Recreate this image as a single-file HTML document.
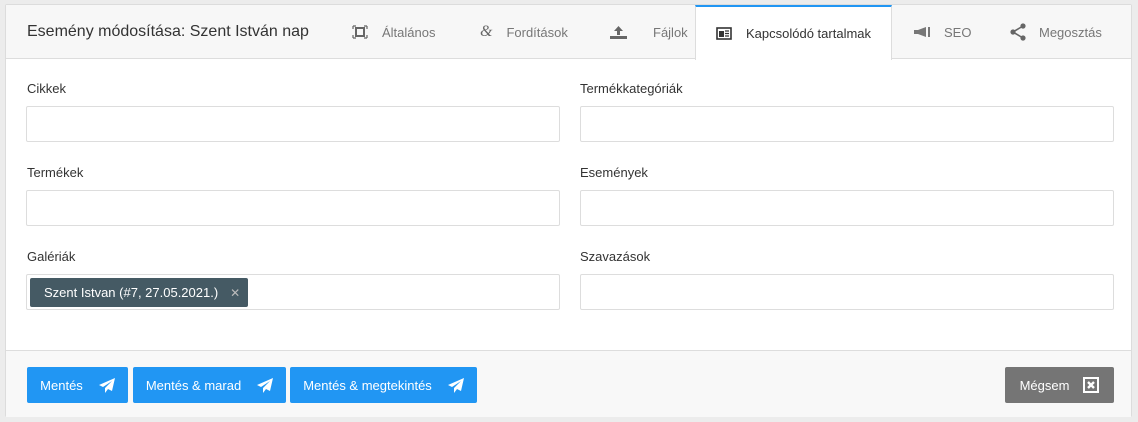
<!DOCTYPE html>
<html><head><meta charset="utf-8"><style>
*{box-sizing:border-box;margin:0;padding:0}
body{width:1138px;height:422px;background:#ececec;font-family:"Liberation Sans",Arial,sans-serif;position:relative;overflow:hidden}
.card{position:absolute;left:5px;top:4px;width:1127px;height:413px;background:#fff;border:1px solid #dcdcdc;border-radius:2px}
.hdr{position:absolute;left:0;top:0;width:100%;height:54px;background:#f7f7f7;border-bottom:1px solid #ddd}
.title{position:absolute;left:21px;top:18px;font-size:16px;color:#333}
.tab{position:absolute;top:0;height:54px;font-size:13px;color:#777;display:flex;align-items:center;gap:14px}
.tab.act{background:#fff;border-top:2px solid #2196f3;border-left:1px solid #ddd;border-right:1px solid #ddd;height:55px;color:#333;padding:0 20px}
.lbl{position:absolute;font-size:13px;color:#333}
.inp{position:absolute;width:534px;height:36px;border:1px solid #ddd;border-radius:2px;background:#fff}
.tag{position:absolute;left:3px;top:3px;height:29px;width:218px;background:#455a64;border-radius:2px;color:#fff;font-size:13px;padding:7px 0 0 14px}
.foot{position:absolute;left:0;top:345px;width:100%;height:67px;background:#f8f8f8;border-top:1px solid #ddd}
.btn{position:absolute;top:16px;height:36px;background:#2196f3;border-radius:2px;color:#fff;font-size:13px;display:flex;align-items:center;justify-content:center;gap:16px}
</style></head><body>
<div class="card">
<div class="hdr">
<div class="title">Esemény módosítása: Szent István nap</div>
<div class="tab" style="left:346px"><svg width="16" height="14" viewBox="0 0 16 14"><rect x="4" y="3" width="8" height="8" fill="none" stroke="#666" stroke-width="2"/><path d="M1 1h3M12 1h3M1 13h3M12 13h3M1 1v3M15 1v3M1 10v3M15 10v3" stroke="#666" stroke-width="1.2"/></svg>Általános</div>
<div class="tab" style="left:474px"><span style="font-style:italic;font-size:16px;color:#666;font-family:'Liberation Serif',serif">&amp;</span>Fordítások</div>
<div class="tab" style="left:604px;gap:26px"><svg width="17" height="14" viewBox="0 0 17 14"><path d="M8.5 1L4 6h3v4h3V6h3z M0 11h17v3H0z" fill="#666"/></svg>Fájlok</div>
<div class="tab act" style="left:689px"><svg width="16" height="13" viewBox="0 0 16 13"><rect x="1" y="1" width="14" height="11" fill="none" stroke="#333" stroke-width="1.6"/><rect x="3" y="4" width="5" height="6" fill="#333"/><path d="M9 4h4M9 6.5h4M9 9h4" stroke="#333" stroke-width="1.2"/></svg>Kapcsolódó tartalmak</div>
<div class="tab" style="left:908px;gap:12px"><svg width="18" height="12" viewBox="0 0 18 12"><path d="M0 4h4l8-3v10l-8-3H0z" fill="#777"/><rect x="14" y="1" width="2" height="10" fill="#777"/></svg>SEO</div>
<div class="tab" style="left:1003px;gap:12px"><svg width="18" height="18" viewBox="0 0 18 18"><circle cx="14" cy="3" r="2.6" fill="#666"/><circle cx="4" cy="9" r="2.6" fill="#666"/><circle cx="14" cy="15" r="2.6" fill="#666"/><path d="M14 3L4 9l10 6" stroke="#666" stroke-width="1.6" fill="none"/></svg>Megosztás</div>
</div>
<div class="lbl" style="left:21px;top:76px">Cikkek</div>
<div class="inp" style="left:20px;top:101px"></div>
<div class="lbl" style="left:574px;top:76px">Termékkategóriák</div>
<div class="inp" style="left:574px;top:101px"></div>
<div class="lbl" style="left:21px;top:160px">Termékek</div>
<div class="inp" style="left:20px;top:185px"></div>
<div class="lbl" style="left:574px;top:160px">Események</div>
<div class="inp" style="left:574px;top:185px"></div>
<div class="lbl" style="left:21px;top:244px">Galériák</div>
<div class="inp" style="left:20px;top:269px"><div class="tag">Szent Istvan (#7, 27.05.2021.)<span style="margin-left:12px;color:#bbb;font-size:12px">✕</span></div></div>
<div class="lbl" style="left:574px;top:244px">Szavazások</div>
<div class="inp" style="left:574px;top:269px"></div>
<div class="foot">
<div class="btn" style="left:21px;width:101px">Mentés<svg width="16" height="15" viewBox="0 0 16 15"><path d="M16 0L0 7l4 2 9-6-7 7v5l3-4 4 2z" fill="#fff"/></svg></div>
<div class="btn" style="left:127px;width:153px">Mentés &amp; marad<svg width="16" height="15" viewBox="0 0 16 15"><path d="M16 0L0 7l4 2 9-6-7 7v5l3-4 4 2z" fill="#fff"/></svg></div>
<div class="btn" style="left:284px;width:187px">Mentés &amp; megtekintés<svg width="16" height="15" viewBox="0 0 16 15"><path d="M16 0L0 7l4 2 9-6-7 7v5l3-4 4 2z" fill="#fff"/></svg></div>
<div class="btn" style="left:999px;width:109px;background:#757575;gap:14px">Mégsem<svg width="16" height="16" viewBox="0 0 16 16"><rect x="1" y="1" width="14" height="14" fill="none" stroke="#fff" stroke-width="2"/><path d="M5 5l6 6M11 5l-6 6" stroke="#fff" stroke-width="2.4"/></svg></div>
</div>
</div>
</body></html>
